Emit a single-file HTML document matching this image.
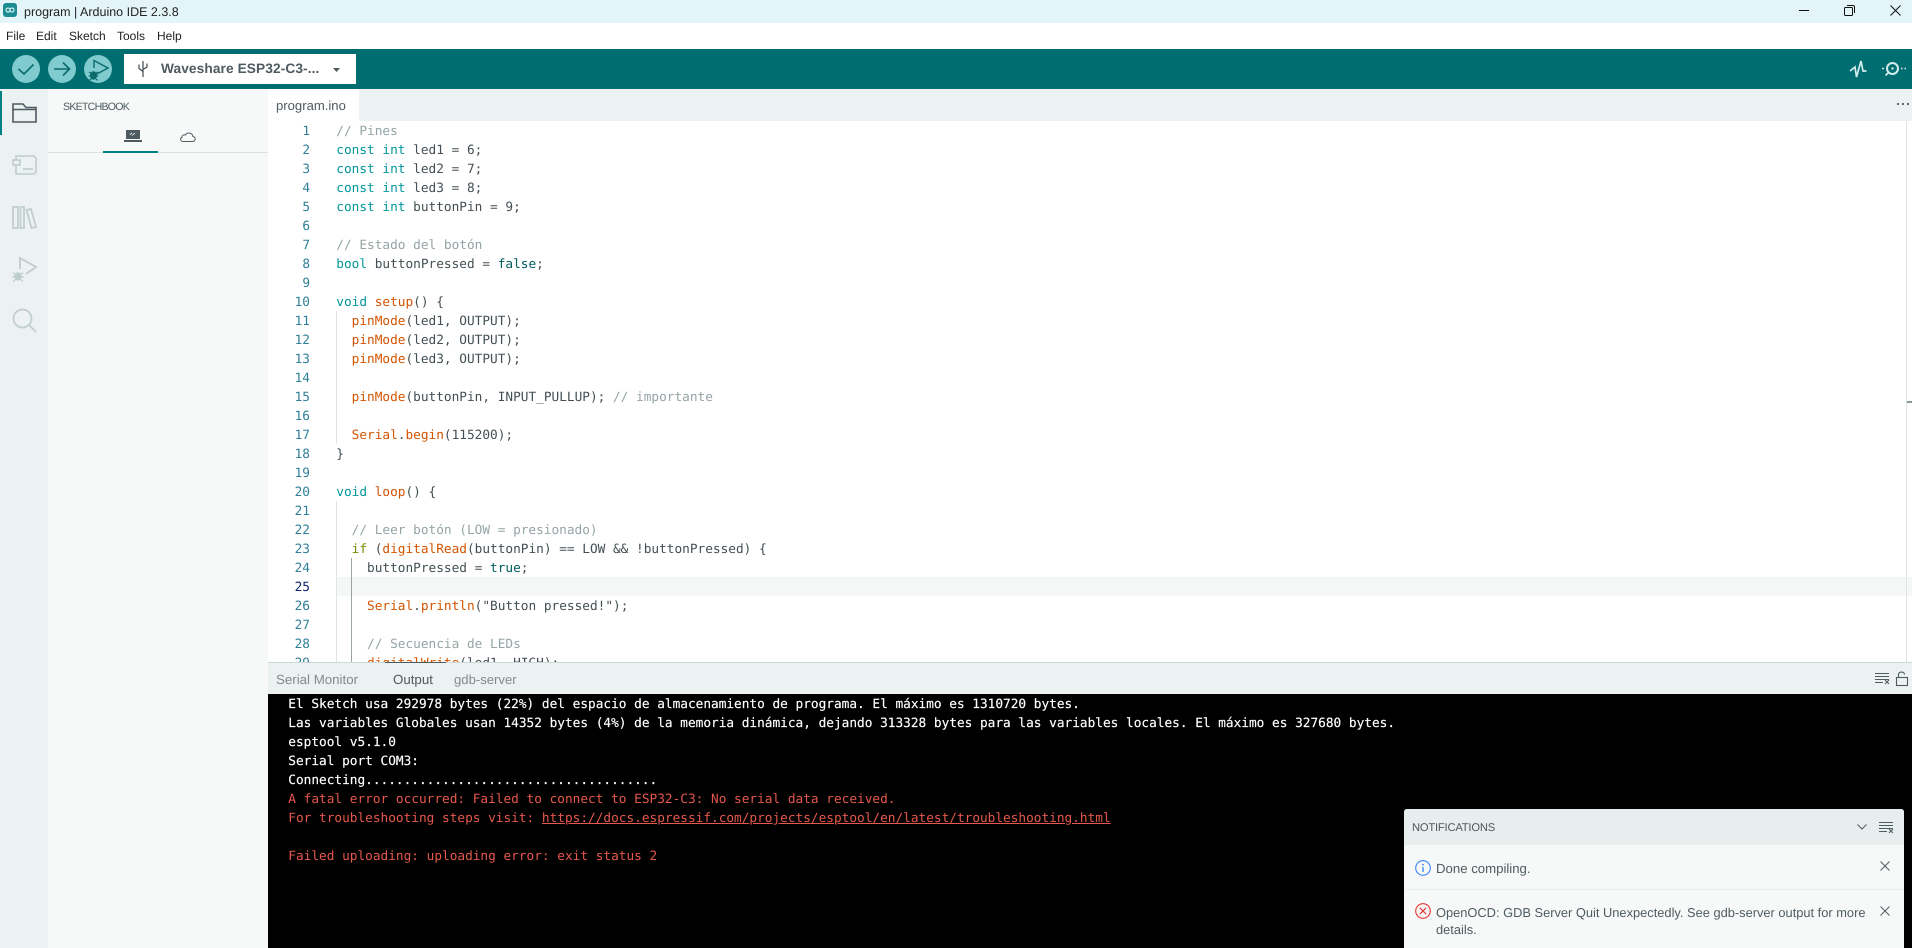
<!DOCTYPE html>
<html><head><meta charset="utf-8"><title>program | Arduino IDE 2.3.8</title>
<style>
html,body{margin:0;padding:0;width:1912px;height:948px;overflow:hidden;background:#fff;font-family:"Liberation Sans",sans-serif;color:#4e5b61}
*{box-sizing:border-box}
.a{position:absolute}
.t{position:absolute;white-space:nowrap;line-height:20px;height:20px;text-rendering:geometricPrecision}
svg{position:absolute;overflow:visible}
.mono{font-family:"DejaVu Sans Mono",monospace;font-size:12.78px;text-rendering:geometricPrecision;white-space:pre}
.ln{position:absolute;left:268px;width:42px;text-align:right;height:19px;line-height:19px;color:#2f7f98;transform:translateY(1px)}
.c{position:absolute;left:336.3px;height:19px;line-height:19px;color:#434f54;transform:translateY(1px)}
.o{position:absolute;left:20.3px;height:19px;line-height:19px;color:#fff;-webkit-text-stroke:.15px #fff;transform:translateY(1px)}
.r{color:#e5584c;-webkit-text-stroke:0}
.k{color:#00979d}.m{color:#95a5a6}.f{color:#d35400}.b{color:#005c5f}.g{color:#728e00}
</style></head><body>
<!-- title bar -->
<div class="a" style="left:0;top:0;width:1912px;height:23px;background:#e4f5f9"></div>
<div class="a" style="left:3px;top:3px;width:14px;height:14px;border-radius:3px;background:#1d8c92"></div>
<svg style="left:3px;top:3px" width="14" height="14" fill="none" stroke="#cfeeee" stroke-width="1.2"><circle cx="5" cy="7" r="2"/><circle cx="9" cy="7" r="2"/></svg>
<div class="t" style="left:24px;top:2px;font-size:12.5px;color:#222">program | Arduino IDE 2.3.8</div>
<svg style="left:1799px;top:10px" width="10" height="2"><path d="M0 .5H10" stroke="#111" stroke-width="1"/></svg>
<svg style="left:1844px;top:5px" width="11" height="11" fill="none" stroke="#111" stroke-width="1"><rect x=".5" y="2.5" width="8" height="8" rx="1"/><path d="M3 .5H9a1.5 1.5 0 0 1 1.5 1.5V8"/></svg>
<svg style="left:1890px;top:5px" width="11" height="11" fill="none" stroke="#111" stroke-width="1"><path d="M.5 .5L10.5 10.5M10.5 .5L.5 10.5"/></svg>
<!-- menu -->
<div class="t" style="left:6px;top:26px;font-size:12px;color:#222">File</div>
<div class="t" style="left:36px;top:26px;font-size:12px;color:#222">Edit</div>
<div class="t" style="left:69px;top:26px;font-size:12px;color:#222">Sketch</div>
<div class="t" style="left:117px;top:26px;font-size:12px;color:#222">Tools</div>
<div class="t" style="left:157px;top:26px;font-size:12px;color:#222">Help</div>
<!-- toolbar -->
<div class="a" style="left:0;top:49px;width:1912px;height:40px;background:#006d70"></div>
<div class="a" style="left:12px;top:55px;width:28px;height:28px;border-radius:50%;background:#7fcbcd"></div>
<div class="a" style="left:48px;top:55px;width:28px;height:28px;border-radius:50%;background:#7fcbcd"></div>
<div class="a" style="left:84px;top:55px;width:28px;height:28px;border-radius:50%;background:#7fcbcd"></div>
<svg style="left:12px;top:55px" width="28" height="28" fill="none" stroke="#0b6a6e" stroke-width="1.6"><path d="M6.5 14L12 19L21.5 9.5"/></svg>
<svg style="left:48px;top:55px" width="28" height="28" fill="none" stroke="#0b6a6e" stroke-width="1.6"><path d="M6 14H21M15 7.5L21.5 14L15 20.5"/></svg>
<svg style="left:84px;top:55px" width="28" height="28" fill="none" stroke="#0b6a6e" stroke-width="1.4"><path d="M10 13V5.5L24 13L13 19"/><ellipse cx="9.5" cy="20.5" rx="3.6" ry="4.2" fill="#0b6a6e" stroke="none"/><path d="M5 17L7.5 18.5M14 17L11.5 18.5M4.5 21H14.5M5 25.5L7.5 23.5M14 25.5L11.5 23.5" stroke-width="1.1"/></svg>
<div class="a" style="left:124px;top:54px;width:232px;height:30px;background:#fff"></div>
<svg style="left:138px;top:61px" width="10" height="16" fill="none" stroke="#3f4b50" stroke-width="1.2"><path d="M5 0V16M1 3.5V7.5L5 10.5M9 2.5V6L5 8.5"/></svg>
<div class="t" style="left:161px;top:59px;font-size:13.7px;font-weight:700;letter-spacing:.1px;color:#4e5b61">Waveshare ESP32-C3-...</div>
<svg style="left:333px;top:68px" width="7" height="4"><path d="M0 0H7L3.5 4Z" fill="#4e5b61"/></svg>
<svg style="left:1850px;top:60px" width="17" height="18" fill="none" stroke="#d5ecec" stroke-width="1.7"><path d="M0 11L5 7L6.5 17L11 1L13 11L16.5 11"/></svg>
<svg style="left:1882px;top:60px" width="24" height="18" fill="none" stroke="#d5ecec" stroke-width="1.7"><circle cx="10.5" cy="8.5" r="5.5" stroke-width="2"/><circle cx="10.5" cy="8.5" r="1.2" fill="#d5ecec" stroke="none"/><path d="M6 13L3.5 15.5"/><path d="M0 8.5H2M19 8.5H20.5M22.5 8.5H24" stroke-width="1.4"/></svg>
<!-- activity bar -->
<div class="a" style="left:0;top:89px;width:48px;height:859px;background:#ecf1f1"></div>
<div class="a" style="left:0;top:91px;width:2px;height:44px;background:#008184"></div>
<svg style="left:12px;top:103px" width="25" height="20" fill="none" stroke="#4e5b61" stroke-width="1.6"><path d="M1 19V1H11L14 4.5H24V19Z"/><path d="M1 6.5H24"/></svg>
<svg style="left:12px;top:155px" width="25" height="20" fill="none" stroke="#c0cdcd" stroke-width="1.6"><path d="M4 5V1H22L24 3V17L22 19H4V10"/><rect x="1" y="5" width="7" height="5"/><path d="M11 14H21"/></svg>
<svg style="left:12px;top:205px" width="25" height="24" fill="none" stroke="#c0cdcd" stroke-width="1.7"><path d="M1 2H6V23H1ZM8.5 2H12V23H8.5ZM14.5 5L19 4L24 22L19.5 23Z"/></svg>
<svg style="left:12px;top:257px" width="25" height="26" fill="none" stroke="#c0cdcd" stroke-width="1.8"><path d="M8 12V1L24 10L14 17"/><ellipse cx="6" cy="19.5" rx="3.6" ry="4.2" fill="#c0cdcd" stroke="none"/><path d="M1 15.5L3.5 17.5M11 15.5L8.5 17.5M0 20H12M1 24.5L3.5 22.5M11 24.5L8.5 22.5" stroke-width="1.2"/></svg>
<svg style="left:12px;top:308px" width="25" height="25" fill="none" stroke="#c0cdcd" stroke-width="1.7"><circle cx="10.5" cy="10.5" r="9"/><path d="M17 17L24 24"/></svg>
<!-- sidebar -->
<div class="a" style="left:48px;top:89px;width:220px;height:859px;background:#f7f9f9"></div>
<div class="t" style="left:63px;top:97px;font-size:10.6px;letter-spacing:-.75px;color:#4e5b61">SKETCHBOOK</div>
<div class="a" style="left:48px;top:152px;width:220px;height:1px;background:#dae3e3"></div>
<div class="a" style="left:103px;top:151px;width:55px;height:2px;background:#008184"></div>
<svg style="left:124px;top:130px" width="18" height="13"><rect x="2" y="0" width="14" height="9" fill="#4e5b61"/><path d="M0 10H18V12H0Z" fill="#4e5b61"/><path d="M6 4.5L8 3M8 5.5L11 3" stroke="#fff" stroke-width=".8"/></svg>
<svg style="left:180px;top:132px" width="16" height="10" fill="none" stroke="#4e5b61" stroke-width="1"><path d="M3.5 9.5H12.5C16 9.5 16 4.5 13 4.5C12.5 1 7 -.5 5.5 3C2.5 2.5 1.5 4.5 2 5.5C-.5 6.5 .5 9.5 3.5 9.5Z"/></svg>
<!-- tab bar -->
<div class="a" style="left:268px;top:89px;width:1644px;height:32px;background:#ecf1f1"></div>
<div class="a" style="left:268px;top:89px;width:91px;height:32px;background:#fff"></div>
<div class="t" style="left:276px;top:96px;font-size:13.1px;color:#4e5b61">program.ino</div>
<svg style="left:1896px;top:102px" width="14" height="4" fill="#4e5b61"><circle cx="2" cy="2" r="1.1"/><circle cx="7" cy="2" r="1.1"/><circle cx="12" cy="2" r="1.1"/></svg>
<!-- editor -->
<div class="a" style="left:268px;top:121px;width:1644px;height:541px;overflow:hidden">
<div class="a" style="left:69px;top:456px;width:1575px;height:19px;background:#f5f7f7"></div>
<div class="a" style="left:68px;top:190px;width:1px;height:133px;background:#dfe4e4"></div>
<div class="a" style="left:68px;top:380px;width:1px;height:161px;background:#dfe4e4"></div>
<div class="a" style="left:83px;top:437px;width:1px;height:104px;background:#9aa3a6"></div>
<div class="a" style="left:1638px;top:0;width:1px;height:541px;background:#dfe3e3"></div>
<div class="a" style="left:1639px;top:280px;width:5px;height:2px;background:#8a9699"></div>
</div>
<div class="a mono" style="left:0;top:0;width:1912px;height:662px;overflow:hidden">
<div class="ln" style="top:121px">1</div><div class="ln" style="top:140px">2</div><div class="ln" style="top:159px">3</div><div class="ln" style="top:178px">4</div><div class="ln" style="top:197px">5</div><div class="ln" style="top:216px">6</div><div class="ln" style="top:235px">7</div><div class="ln" style="top:254px">8</div><div class="ln" style="top:273px">9</div><div class="ln" style="top:292px">10</div><div class="ln" style="top:311px">11</div><div class="ln" style="top:330px">12</div><div class="ln" style="top:349px">13</div><div class="ln" style="top:368px">14</div><div class="ln" style="top:387px">15</div><div class="ln" style="top:406px">16</div><div class="ln" style="top:425px">17</div><div class="ln" style="top:444px">18</div><div class="ln" style="top:463px">19</div><div class="ln" style="top:482px">20</div><div class="ln" style="top:501px">21</div><div class="ln" style="top:520px">22</div><div class="ln" style="top:539px">23</div><div class="ln" style="top:558px">24</div><div class="ln" style="top:577px;color:#0b216f">25</div><div class="ln" style="top:596px">26</div><div class="ln" style="top:615px">27</div><div class="ln" style="top:634px">28</div><div class="ln" style="top:653px">29</div>
<div class="c m" style="top:121px">// Pines</div>
<div class="c" style="top:140px"><span class="k">const</span> <span class="k">int</span> led1 = 6;</div>
<div class="c" style="top:159px"><span class="k">const</span> <span class="k">int</span> led2 = 7;</div>
<div class="c" style="top:178px"><span class="k">const</span> <span class="k">int</span> led3 = 8;</div>
<div class="c" style="top:197px"><span class="k">const</span> <span class="k">int</span> buttonPin = 9;</div>
<div class="c m" style="top:235px">// Estado del botón</div>
<div class="c" style="top:254px"><span class="k">bool</span> buttonPressed = <span class="b">false</span>;</div>
<div class="c" style="top:292px"><span class="k">void</span> <span class="f">setup</span>() {</div>
<div class="c" style="top:311px">  <span class="f">pinMode</span>(led1, OUTPUT);</div>
<div class="c" style="top:330px">  <span class="f">pinMode</span>(led2, OUTPUT);</div>
<div class="c" style="top:349px">  <span class="f">pinMode</span>(led3, OUTPUT);</div>
<div class="c" style="top:387px">  <span class="f">pinMode</span>(buttonPin, INPUT_PULLUP); <span class="m">// importante</span></div>
<div class="c" style="top:425px">  <span class="f">Serial</span>.<span class="f">begin</span>(115200);</div>
<div class="c" style="top:444px">}</div>
<div class="c" style="top:482px"><span class="k">void</span> <span class="f">loop</span>() {</div>
<div class="c m" style="top:520px">  // Leer botón (LOW = presionado)</div>
<div class="c" style="top:539px">  <span class="g">if</span> (<span class="f">digitalRead</span>(buttonPin) == LOW &amp;&amp; !buttonPressed) {</div>
<div class="c" style="top:558px">    buttonPressed = <span class="b">true</span>;</div>
<div class="c" style="top:596px">    <span class="f">Serial</span>.<span class="f">println</span>("Button pressed!");</div>
<div class="c m" style="top:634px">    // Secuencia de LEDs</div>
<div class="c" style="top:653px">    <span class="f">digitalWrite</span>(led1, HIGH);</div>
</div>
<!-- panel header -->
<div class="a" style="left:268px;top:662px;width:1644px;height:32px;background:#ecf1f1;border-top:1px solid #cfd8d8"></div>
<div class="a" style="left:385px;top:662px;width:61px;height:1px;background:#4e5b61"></div>
<div class="t" style="left:276px;top:670px;font-size:13.3px;color:#7f8c8d">Serial Monitor</div>
<div class="t" style="left:393px;top:670px;font-size:13.3px;color:#4e5b61">Output</div>
<div class="t" style="left:454px;top:670px;font-size:13.1px;color:#7f8c8d">gdb-server</div>
<svg style="left:1875px;top:673px" width="15" height="11" stroke="#4e5b61" stroke-width="1" fill="none"><path d="M0 .5H14M0 3.5H14M0 6.5H14M0 9.5H8M10 7L14 11M14 7L10 11"/></svg>
<svg style="left:1896px;top:671px" width="13" height="15" stroke="#4e5b61" stroke-width="1.1" fill="none"><rect x=".5" y="6.5" width="11" height="8"/><path d="M2.5 6.5V3.5C2.5 .2 8.5 .2 8.5 3.5"/></svg>
<!-- output -->
<div class="a mono" style="left:268px;top:694px;width:1644px;height:254px;background:#000">
<div class="o" style="top:0">El Sketch usa 292978 bytes (22%) del espacio de almacenamiento de programa. El máximo es 1310720 bytes.</div>
<div class="o" style="top:19px">Las variables Globales usan 14352 bytes (4%) de la memoria dinámica, dejando 313328 bytes para las variables locales. El máximo es 327680 bytes.</div>
<div class="o" style="top:38px">esptool v5.1.0</div>
<div class="o" style="top:57px">Serial port COM3:</div>
<div class="o" style="top:76px">Connecting......................................</div>
<div class="o r" style="top:95px">A fatal error occurred: Failed to connect to ESP32-C3: No serial data received.</div>
<div class="o r" style="top:114px">For troubleshooting steps visit: <span style="text-decoration:underline">https://docs.espressif.com/projects/esptool/en/latest/troubleshooting.html</span></div>
<div class="o r" style="top:152px">Failed uploading: uploading error: exit status 2</div>
</div>
<!-- notifications -->
<div class="a" style="left:1404px;top:809px;width:500px;height:139px;background:#f7f9f9;border-radius:3px 3px 0 0;overflow:hidden">
<div class="a" style="left:0;top:0;width:500px;height:36px;background:#e8eded"></div>
<div class="a" style="left:0;top:80px;width:500px;height:1px;background:#e8eded"></div>
</div>
<div class="t" style="left:1412px;top:818px;font-size:11.2px;letter-spacing:-.2px;color:#4e5b61">NOTIFICATIONS</div>
<svg style="left:1857px;top:824px" width="10" height="6" fill="none" stroke="#4e5b61"><path d="M.5 .5L5 5L9.5 .5"/></svg>
<svg style="left:1879px;top:822px" width="14" height="11" stroke="#4e5b61" fill="none"><path d="M0 .5H14M0 3.5H14M0 6.5H14M0 9.5H8M10 7L14 11M14 7L10 11"/></svg>
<svg style="left:1415px;top:860px" width="16" height="16" fill="none" stroke="#3b82f6" stroke-width="1.1"><circle cx="8" cy="8" r="7.3"/><path d="M8 7V12" stroke-width="1.3"/><circle cx="8" cy="4.7" r=".9" fill="#3b82f6" stroke="none"/></svg>
<div class="t" style="left:1436px;top:858.5px;font-size:13.2px;color:#4e5b61">Done compiling.</div>
<svg style="left:1880px;top:861px" width="10" height="10" fill="none" stroke="#4e5b61"><path d="M.5 .5L9.5 9.5M9.5 .5L.5 9.5"/></svg>
<svg style="left:1415px;top:903px" width="16" height="16" fill="none" stroke="#e5342e" stroke-width="1.1"><circle cx="8" cy="8" r="7.3"/><path d="M4.8 4.8L11.2 11.2M11.2 4.8L4.8 11.2"/></svg>
<div class="t" style="left:1436px;top:903px;font-size:12.85px;color:#4e5b61">OpenOCD: GDB Server Quit Unexpectedly. See gdb-server output for more</div>
<div class="t" style="left:1436px;top:920px;font-size:12.85px;color:#4e5b61">details.</div>
<svg style="left:1880px;top:906px" width="10" height="10" fill="none" stroke="#4e5b61"><path d="M.5 .5L9.5 9.5M9.5 .5L.5 9.5"/></svg>
</body></html>
